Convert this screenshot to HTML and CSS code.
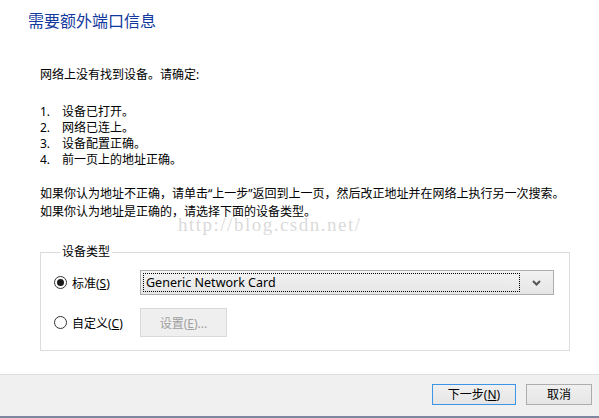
FILE: index.html
```html
<!DOCTYPE html>
<html lang="zh-CN">
<head>
<meta charset="utf-8">
<title>需要额外端口信息</title>
<link rel="stylesheet" href="styles.css">
</head>
<body>
<div class="dialog">
  <main class="content">
    <h1 class="title">需要额外端口信息</h1>
    <div class="body">
      <p class="intro">网络上没有找到设备。请确定:</p>
      <ol class="checks">
        <li><span class="num">1.</span>设备已打开。</li>
        <li><span class="num">2.</span>网络已连上。</li>
        <li><span class="num">3.</span>设备配置正确。</li>
        <li><span class="num">4.</span>前一页上的地址正确。</li>
      </ol>
      <p class="para">如果你认为地址不正确，请单击“上一步”返回到上一页，然后改正地址并在网络上执行另一次搜索。<br>如果你认为地址是正确的，请选择下面的设备类型。</p>
      <span class="watermark">http://blog.csdn.net/</span>
      <fieldset class="group">
        <legend class="legend">设备类型</legend>
        <div class="grid">
          <label class="radio"><span class="dot checked"></span><span>标准(<u>S</u>)</span></label>
          <div class="combo">
            <div class="combo-focus">Generic Network Card</div>
            <svg class="chev" width="9" height="6" viewBox="0 0 9 6"><path d="M1 1 L4.5 4.5 L8 1" fill="none" stroke="#555" stroke-width="2"/></svg>
          </div>
          <label class="radio"><span class="dot"></span><span>自定义(<u>C</u>)</span></label>
          <div><button class="btn-disabled" disabled>设置(<u>E</u>)...</button></div>
        </div>
      </fieldset>
    </div>
  </main>
  <footer class="footer">
    <button class="btn btn-default">下一步(<u>N</u>)</button>
    <button class="btn">取消</button>
  </footer>
</div>
</body>
</html>
```
FILE: styles.css
```css
* { box-sizing: border-box; }
html, body { margin: 0; padding: 0; background: #fff; }
body {
  font-family: "Noto Sans", "Noto Sans CJK SC", sans-serif;
  font-size: 12px;
  color: #000;
}
.dialog {
  width: 599px;
  height: 418px;
  display: flex;
  flex-direction: column;
  overflow: hidden;
}
.content {
  height: 375px;
  border-bottom: 1px solid #dfdfdf;
}
.title {
  margin: 0;
  padding: 11px 0 0 28px;
  font-size: 16px;
  line-height: 20px;
  font-weight: normal;
  color: #12399e;
}
.body {
  position: relative;
  padding: 36px 0 0 40px;
}
.intro {
  margin: 0;
  line-height: 16px;
}
.checks {
  list-style: none;
  margin: 21px 0 0;
  padding: 0;
  line-height: 16px;
}
.num {
  display: inline-block;
  width: 22px;
  font-family: "Noto Sans", sans-serif;
}
.para {
  margin: 17px 0 0;
  line-height: 18px;
}
.watermark {
  position: absolute;
  left: 178px;
  top: 183px;
  font-family: "Liberation Serif", serif;
  font-size: 19px;
  letter-spacing: 1.5px;
  color: #dadada;
  line-height: 22px;
}
.group {
  margin: 23px 0 0;
  width: 530px;
  border: 1px solid #dcdcdc;
  padding: 10px 15px 13px 13px;
  min-width: 0;
}
.legend {
  margin-left: 6px;
  padding: 0 2px;
  line-height: 16px;
}
.grid {
  display: grid;
  grid-template-columns: 86px 1fr;
  row-gap: 13px;
  align-items: center;
}
.radio {
  display: flex;
  align-items: center;
  gap: 5px;
}
.dot {
  width: 13px;
  height: 13px;
  border-radius: 50%;
  border: 1px solid #333;
  background: #fff;
  display: inline-flex;
  align-items: center;
  justify-content: center;
}
.dot.checked::after {
  content: "";
  width: 7px;
  height: 7px;
  border-radius: 50%;
  background: #1a1a1a;
}
.combo {
  height: 25px;
  border: 1px solid #adadad;
  background: linear-gradient(#f2f2f2, #e6e6e6);
  display: flex;
  align-items: center;
  padding: 2px 12px 2px 2px;
}
.combo-focus {
  flex: 1;
  height: 19px;
  border: 1px dotted #000;
  padding-left: 2px;
  font-size: 12.5px;
  line-height: 17px;
  margin-right: 12px;
}
.chev { display: block; }
.btn-disabled {
  width: 87px;
  height: 29px;
  border: 1px solid #d9d9d9;
  background: #efefef;
  color: #a0a0a0;
  font: inherit;
  font-size: 12px;
  padding: 0;
}
.footer {
  height: 43px;
  background: #f0f0f0;
  border-bottom: 2px solid #7d87a0;
  display: flex;
  justify-content: flex-end;
  align-items: flex-start;
  gap: 10px;
  padding: 9px 7px 0 0;
}
.btn {
  width: 66px;
  height: 21px;
  border: 1px solid #adadad;
  background: linear-gradient(#f0f0f0, #e5e5e5);
  font: inherit;
  font-size: 12px;
  color: #000;
  padding: 0;
  line-height: 19px;
}
.btn-default {
  width: 84px;
  border-color: #3d95e6;
}
u { text-decoration: underline; }
```
